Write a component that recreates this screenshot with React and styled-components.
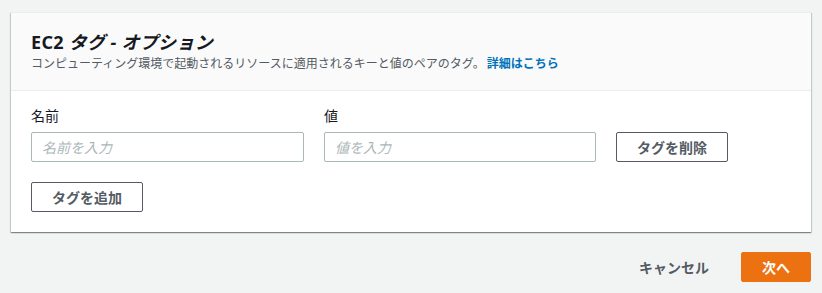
import React from "react";
import styled, { createGlobalStyle } from "styled-components";

const GlobalStyle = createGlobalStyle`
  body {
    margin: 0;
    background: #f2f3f3;
    font-family: "Noto Sans", "Noto Sans CJK JP", sans-serif;
    color: #16191f;
  }
`;

const Page = styled.div`
  padding: 12px 11px 11px;
`;

const Card = styled.div`
  background: #fff;
  border-top: 1px solid #eaeded;
  box-shadow: 0 1px 1px 0 rgba(0, 28, 36, 0.3), 1px 1px 1px 0 rgba(0, 28, 36, 0.15),
    -1px 1px 1px 0 rgba(0, 28, 36, 0.15);
`;

const Header = styled.div`
  background: #fafafa;
  border-bottom: 1px solid #eaeded;
  padding: 18px 20px 17px;
`;

const Title = styled.h2`
  margin: 0;
  font-size: 18px;
  line-height: 22px;
  font-weight: 700;
  letter-spacing: 0.3px;
  em {
    font-style: italic;
  }
`;

const Description = styled.p`
  margin: 2px 0 0;
  font-size: 12px;
  line-height: 18px;
  color: #545b64;
`;

const Link = styled.a`
  color: #0073bb;
  font-weight: 700;
  text-decoration: none;
  margin-left: 2px;
`;

const Body = styled.div`
  padding: 15px 20px 20px;
`;

const TagRow = styled.div`
  display: grid;
  grid-template-columns: 273px 272px auto;
  column-gap: 20px;
  align-items: end;
`;

const Field = styled.div`
  display: flex;
  flex-direction: column;
  gap: 6px;
`;

const Label = styled.label`
  font-size: 14px;
  line-height: 20px;
  font-weight: 400;
`;

const Input = styled.input`
  box-sizing: border-box;
  height: 30px;
  width: 100%;
  border: 1px solid #aab7b8;
  border-radius: 2px;
  padding: 0 10px;
  font: inherit;
  font-size: 14px;
  &::placeholder {
    color: #aab7b8;
    font-style: italic;
  }
`;

const Button = styled.button`
  box-sizing: border-box;
  height: 30px;
  padding: 0 20px;
  border: 1px solid ${(p) => (p.$primary ? "#ec7211" : "#545b64")};
  border-radius: 2px;
  background: ${(p) => (p.$primary ? "#ec7211" : "#fff")};
  color: ${(p) => (p.$primary ? "#fff" : "#545b64")};
  font-family: inherit;
  font-size: 14px;
  font-weight: 700;
  justify-self: start;
`;

const LinkButton = styled(Button)`
  border-color: transparent;
  background: transparent;
  padding: 0 10px;
`;

const AddRow = styled.div`
  margin-top: 20px;
`;

const Footer = styled.div`
  display: flex;
  justify-content: flex-end;
  align-items: center;
  gap: 21px;
  margin-top: 20px;
`;

const App = () => {
  return (
    <Page>
      <GlobalStyle />
      <Card>
        <Header>
          <Title>
            EC2 <em>タグ - オプション</em>
          </Title>
          <Description>
            コンピューティング環境で起動されるリソースに適用されるキーと値のペアのタグ。
            <Link href="#">詳細はこちら</Link>
          </Description>
        </Header>
        <Body>
          <TagRow>
            <Field>
              <Label>名前</Label>
              <Input placeholder="名前を入力" />
            </Field>
            <Field>
              <Label>値</Label>
              <Input placeholder="値を入力" />
            </Field>
            <Button>タグを削除</Button>
          </TagRow>
          <AddRow>
            <Button>タグを追加</Button>
          </AddRow>
        </Body>
      </Card>
      <Footer>
        <LinkButton>キャンセル</LinkButton>
        <Button $primary>次へ</Button>
      </Footer>
    </Page>
  );
};

export default App;
